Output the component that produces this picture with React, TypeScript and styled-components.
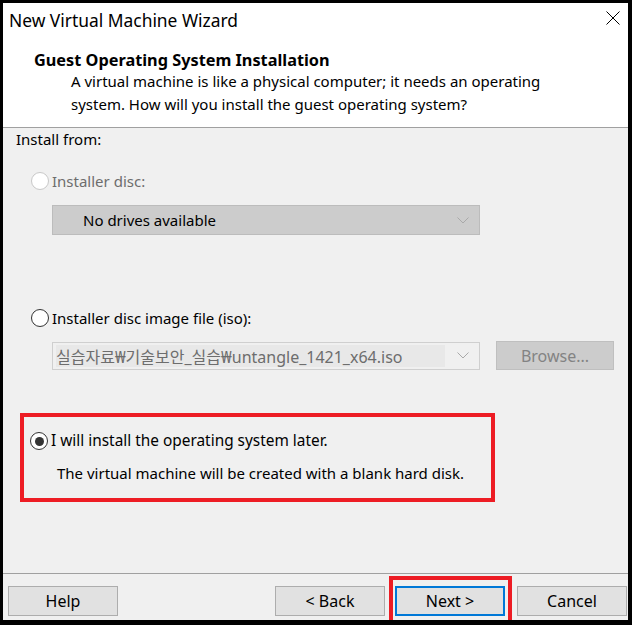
import React from 'react'
import styled, { createGlobalStyle } from 'styled-components'

const GlobalStyle = createGlobalStyle`
  html, body {
    margin: 0;
    padding: 0;
    background: #000;
  }
  body {
    font-family: 'Noto Sans', 'Noto Sans CJK KR', sans-serif;
    color: #000;
  }
`

const Frame = styled.div`
  width: 632px;
  height: 625px;
  box-sizing: border-box;
  padding: 3px 4px 5px 3px;
  background: #000;
`

const Window = styled.div`
  height: 100%;
  display: flex;
  flex-direction: column;
  background: #f0f0f0;
  overflow: hidden;
`

const TitleBar = styled.div`
  height: 34px;
  display: flex;
  align-items: center;
  justify-content: space-between;
  padding: 0 8px 0 6px;
  background: #fff;
  font-size: 17.4px;
`

const CloseIcon = styled.svg`
  width: 14px;
  height: 14px;
  margin-top: -4px;
`

const Header = styled.div`
  height: 91px;
  box-sizing: border-box;
  padding: 13px 0 0 31px;
  background: #fff;
  border-bottom: 1px solid #a0a0a0;
`

const HeaderTitle = styled.div`
  font-size: 16.3px;
  font-weight: 700;
  line-height: 20px;
`

const HeaderText = styled.div`
  padding-left: 37px;
  font-size: 15px;
  line-height: 23px;
`

const Content = styled.div`
  flex: 1;
  display: flex;
  flex-direction: column;
  padding: 0 0 0 13px;
  font-size: 15px;
  border-bottom: 1px solid #a0a0a0;
`

const SectionLabel = styled.div`
  line-height: 22px;
`

const RadioRow = styled.label<{ $disabled?: boolean; $top: number; $left?: number }>`
  display: flex;
  align-items: center;
  gap: 3px;
  margin: ${({ $top, $left = 15 }) => `${$top}px 0 0 ${$left}px`};
  line-height: 22px;
  color: ${({ $disabled }) => ($disabled ? '#6d6d6d' : '#000')};
`

const RadioLabel = styled.span<{ $size?: number }>`
  font-size: ${({ $size = 15 }) => $size}px;
`

const RadioCircle = styled.span<{ $disabled?: boolean; $checked?: boolean }>`
  width: 18px;
  height: 18px;
  box-sizing: border-box;
  border-radius: 50%;
  border: 1px solid ${({ $disabled }) => ($disabled ? '#c8c8c8' : '#333')};
  background: #fff;
  display: flex;
  align-items: center;
  justify-content: center;
  &::after {
    content: '';
    display: ${({ $checked }) => ($checked ? 'block' : 'none')};
    width: 9px;
    height: 9px;
    border-radius: 50%;
    background: #333;
  }
`

const FieldRow = styled.div<{ $top: number }>`
  display: flex;
  align-items: center;
  gap: 16px;
  margin: ${({ $top }) => $top}px 0 0 36px;
`

const Combo = styled.div<{ $filled?: boolean; $height: number }>`
  width: 428px;
  height: ${({ $height }) => $height}px;
  box-sizing: border-box;
  display: flex;
  align-items: center;
  padding: ${({ $filled }) => ($filled ? '0 10px 0 30px' : '0 10px 0 3px')};
  background: ${({ $filled }) => ($filled ? '#cccccc' : '#f0f0f0')};
  border: 1px solid ${({ $filled }) => ($filled ? '#bcbcbc' : '#cfcfcf')};
  font-size: ${({ $filled }) => ($filled ? 15 : 16)}px;
  color: ${({ $filled }) => ($filled ? '#000' : '#6d6d6d')};
`

const ComboText = styled.span<{ $boxed?: boolean }>`
  flex: 1;
  align-self: stretch;
  display: flex;
  align-items: center;
  white-space: nowrap;
  margin: ${({ $boxed }) => ($boxed ? '2px 12px 2px 0' : '0')};
  background: ${({ $boxed }) => ($boxed ? '#e8e8e8' : 'transparent')};
`

const Chevron = styled.svg`
  width: 12px;
  height: 7px;
`

const BrowseButton = styled.div`
  width: 118px;
  height: 29px;
  box-sizing: border-box;
  display: flex;
  align-items: center;
  justify-content: center;
  background: #cccccc;
  border: 1px solid #bfbfbf;
  color: #838383;
  font-size: 16px;
`

const Highlight = styled.div`
  width: 475px;
  height: 89px;
  box-sizing: border-box;
  margin: 43px 0 0 4px;
  border: 4px solid #ed1c24;
  display: flex;
  flex-direction: column;
`

const Note = styled.div`
  margin: 10px 0 0 33px;
  line-height: 22px;
`

const Footer = styled.div`
  flex: 0 0 46px;
  display: flex;
  align-items: flex-start;
  padding: 2px 1px 0 5px;
  box-sizing: border-box;
  font-size: 16px;
`

const Spacer = styled.div`
  flex: 1;
`

const Button = styled.div<{ $primary?: boolean; $flush?: boolean }>`
  width: 110px;
  height: 30px;
  box-sizing: border-box;
  display: flex;
  align-items: center;
  justify-content: center;
  margin-top: ${({ $flush }) => ($flush ? 0 : 10)}px;
  background: #e1e1e1;
  border: ${({ $primary }) => ($primary ? '2px solid #0078d7' : '1px solid #adadad')};
`

const NextMark = styled.div`
  align-self: stretch;
  margin: 0 5px 0 4px;
  padding: 6px 3px 0 2px;
  border: 4px solid #ed1c24;
  border-bottom: none;
`

const ChevronIcon = () => (
  <Chevron viewBox="0 0 12 7">
    <path d="M0.5 0.5 L6 6 L11.5 0.5" fill="none" stroke="#a9a9a9" strokeWidth="1" />
  </Chevron>
)

export default function App() {
  return (
    <>
      <GlobalStyle />
      <Frame>
        <Window>
          <TitleBar>
            <span>New Virtual Machine Wizard</span>
            <CloseIcon viewBox="0 0 14 14">
              <path d="M0.5 0.5 L13.5 13.5 M13.5 0.5 L0.5 13.5" stroke="#000" strokeWidth="1" fill="none" />
            </CloseIcon>
          </TitleBar>
          <Header>
            <HeaderTitle>Guest Operating System Installation</HeaderTitle>
            <HeaderText>
              A virtual machine is like a physical computer; it needs an operating
              <br />
              system. How will you install the guest operating system?
            </HeaderText>
          </Header>
          <Content>
            <SectionLabel>Install from:</SectionLabel>
            <RadioRow $disabled $top={20}>
              <RadioCircle $disabled />
              <RadioLabel>Installer disc:</RadioLabel>
            </RadioRow>
            <FieldRow $top={13}>
              <Combo $filled $height={30}>
                <ComboText>No drives available</ComboText>
                <ChevronIcon />
              </Combo>
            </FieldRow>
            <RadioRow $top={72}>
              <RadioCircle />
              <RadioLabel>Installer disc image file (iso):</RadioLabel>
            </RadioRow>
            <FieldRow $top={12}>
              <Combo $height={28}>
                <ComboText $boxed>실습자료₩기술보안_실습₩untangle_1421_x64.iso</ComboText>
                <ChevronIcon />
              </Combo>
              <BrowseButton>Browse...</BrowseButton>
            </FieldRow>
            <Highlight>
              <RadioRow $top={13} $left={6}>
                <RadioCircle $checked />
                <RadioLabel $size={15.4}>I will install the operating system later.</RadioLabel>
              </RadioRow>
              <Note>The virtual machine will be created with a blank hard disk.</Note>
            </Highlight>
          </Content>
          <Footer>
            <Button>Help</Button>
            <Spacer />
            <Button>&lt; Back</Button>
            <NextMark>
              <Button $primary $flush>Next &gt;</Button>
            </NextMark>
            <Button>Cancel</Button>
          </Footer>
        </Window>
      </Frame>
    </>
  )
}
